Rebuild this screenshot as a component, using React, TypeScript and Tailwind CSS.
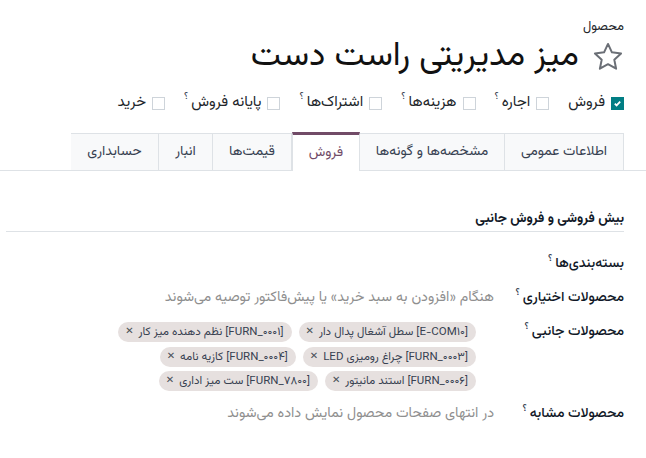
import React from 'react';

const tabs = [
    { label: 'اطلاعات عمومی', w: 'w-[119px]' },
    { label: 'مشخصه‌ها و گونه‌ها', w: 'w-[145px]' },
    { label: 'فروش', w: 'w-[68px]', active: true },
    { label: 'قیمت‌ها', w: 'w-[79px]' },
    { label: 'انبار', w: 'w-[54px]' },
    { label: 'حسابداری', w: 'w-[88px]' },
];

const flags = [
    { label: 'فروش', checked: true, tip: false },
    { label: 'اجاره', tip: true },
    { label: 'هزینه‌ها', tip: true },
    { label: 'اشتراک‌ها', tip: true },
    { label: 'پایانه فروش', tip: true },
    { label: 'خرید', tip: false },
];

const accessories = [
    '[E-COM۱۰] سطل آشغال پدال دار',
    '[FURN_۰۰۰۱] نظم دهنده میز کار',
    '[FURN_۰۰۰۳] چراغ رومیزی LED',
    '[FURN_۰۰۰۴] کازیه نامه',
    '[FURN_۰۰۰۶] استند مانیتور',
    '[FURN_۷۸۰۰] ست میز اداری',
];

function Tip() {
    return <sup className="text-[10px] text-[#374151] mr-[3px] -top-[6px]">؟</sup>;
}

function Star() {
    return (
        <svg width="34" height="32" viewBox="0 0 24 24" fill="none" stroke="#6b6f76" strokeWidth="1.5" strokeLinejoin="round">
            <path d="M12 2.2l2.95 6.3 6.85.8-5.08 4.7 1.37 6.8L12 17.4l-6.09 3.4 1.37-6.8L2.2 9.3l6.85-.8z" />
        </svg>
    );
}

function Tag({ text }: { text: string }) {
    return (
        <span className="inline-flex items-center h-[20px] rounded-full bg-[#e6e0df] text-[#374151] text-[11.5px] pr-[8px] pl-[7px] gap-[5px] whitespace-nowrap">
            <span>{text}</span>
            <span className="text-[10px] font-bold text-[#495057]">✕</span>
        </span>
    );
}

function Row({ label, tip = true, children }: { label: string; tip?: boolean; children?: React.ReactNode }) {
    return (
        <div className="flex items-start">
            <div className="w-[130px] shrink-0 text-[14px] text-[#111827] font-medium leading-[22px]">
                {label}
                {tip && <Tip />}
            </div>
            <div className="flex-1 leading-[22px]">{children}</div>
        </div>
    );
}

export default function App() {
    return (
        <div
            dir="rtl"
            className="w-[646px] h-[458px] overflow-hidden bg-white text-[#212529] font-['Vazirmatn','Noto_Sans_Arabic','Noto_Sans','DejaVu_Sans',sans-serif]"
        >
            <div className="pr-[21px] pl-[22px] pt-[17px]">
                <div className="text-[13px] leading-[20px] pr-[1px]">محصول</div>
                <div className="flex items-center gap-[12px] h-[40px]">
                    <Star />
                    <h1 className="text-[34px] leading-[40px] font-normal text-[#111]">میز مدیریتی راست دست</h1>
                </div>
                <div className="flex items-center mt-[15px] h-[22px] text-[15px] pr-[1px]">
                    {flags.map((f) => (
                        <div key={f.label} className="flex items-center ml-[19px]">
                            <span
                                className={`w-[13px] h-[13px] border ${f.checked ? 'bg-[#017e84] border-[#017e84]' : 'border-[#ced4da] bg-white'} flex items-center justify-center`}
                            >
                                {f.checked && (
                                    <svg width="9" height="9" viewBox="0 0 10 10" fill="none" stroke="white" strokeWidth="2">
                                        <path d="M2 5.2l2 2 4-4.2" />
                                    </svg>
                                )}
                            </span>
                            <span className="mr-[6px]">{f.label}</span>
                            {f.tip && <Tip />}
                        </div>
                    ))}
                </div>
            </div>

            <div className="mt-[18px] border-b border-[#dee2e6] flex pr-[22px] h-[39px]">
                {tabs.map((t) => (
                    <div
                        key={t.label}
                        className={`${t.w} flex items-center justify-center text-[14px] -mb-px ${
                            t.active
                                ? 'bg-white border-x border-[#dee2e6] border-t-[3px] border-t-[#714b67] text-[#714b67] h-[39px]'
                                : 'bg-[#f8f9fa] border border-[#dee2e6] text-[#374151] h-[38px] mt-[1px] border-l-0 first:border-r'
                        }`}
                    >
                        {t.label}
                    </div>
                ))}
            </div>

            <div className="pr-[22px] pl-[6px] pt-[38px]">
                <div className="text-[13.5px] font-bold text-[#111827] pb-[2px] border-b border-[#dee2e6]">بیش فروشی و فروش جانبی</div>
            </div>

            <div className="pr-[22px] pl-[22px] pt-[21px] flex flex-col gap-[12px]">
                <Row label="بسته‌بندی‌ها" />
                <Row label="محصولات اختیاری">
                    <span className="text-[14.3px] text-[#8f8f8f]">هنگام «افزودن به سبد خرید» یا پیش‌فاکتور توصیه می‌شوند</span>
                </Row>
                <Row label="محصولات جانبی">
                    <div className="flex flex-wrap gap-x-[7px] gap-y-[4.5px] pr-[18px] w-[386px] pt-[1px]">
                        {accessories.map((a) => (
                            <Tag key={a} text={a} />
                        ))}
                    </div>
                </Row>
                <Row label="محصولات مشابه">
                    <span className="text-[14.3px] text-[#8f8f8f]">در انتهای صفحات محصول نمایش داده می‌شوند</span>
                </Row>
            </div>
        </div>
    );
}
